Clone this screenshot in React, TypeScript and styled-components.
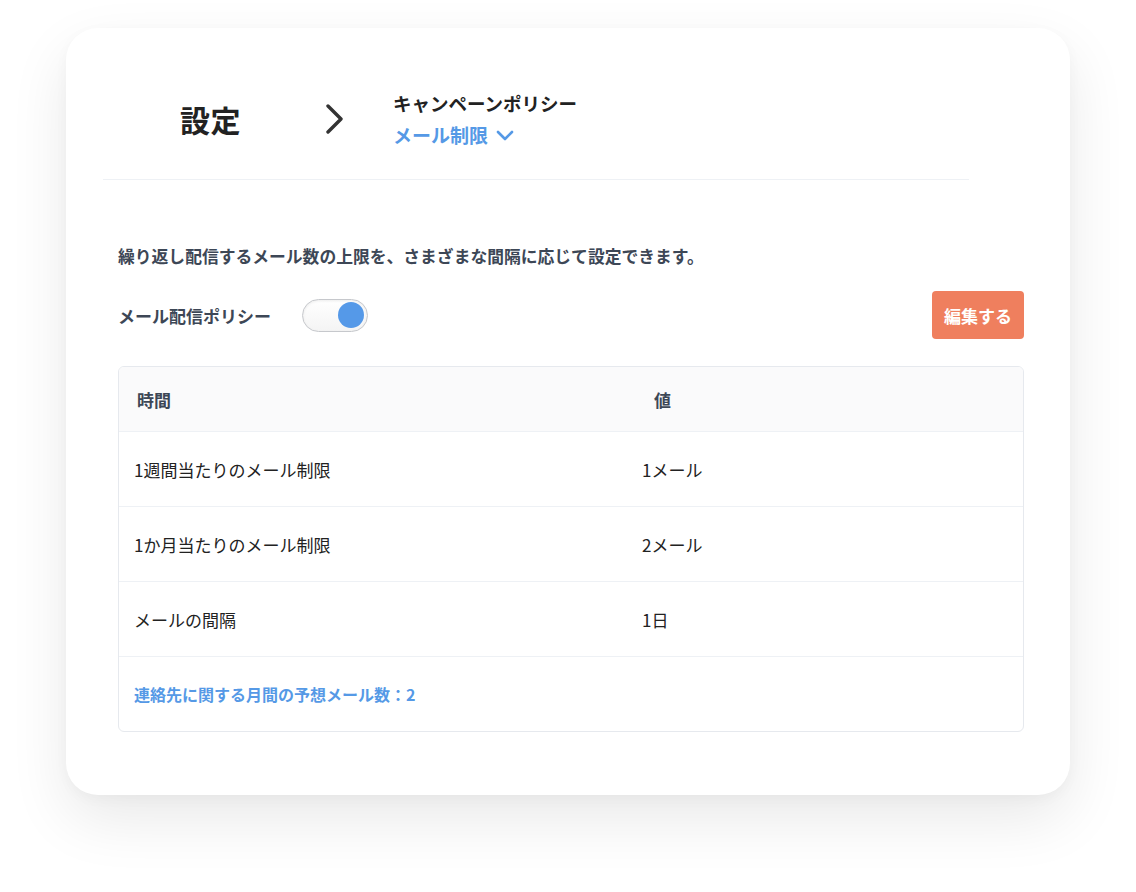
import React from "react";
import styled, { createGlobalStyle } from "styled-components";

const GlobalStyle = createGlobalStyle`
  html, body {
    margin: 0;
    padding: 0;
    background: #ffffff;
    font-family: "Noto Sans CJK JP", "Noto Sans", sans-serif;
  }
`;

const Page = styled.div`
  padding: 28px 66px 98px 66px;
`;

const Card = styled.div`
  width: 1004px;
  background: #fff;
  border-radius: 32px;
  box-shadow: 0 24px 60px rgba(0, 0, 0, 0.09), 0 4px 14px rgba(0, 0, 0, 0.03);
  padding-bottom: 63px;
`;

const Header = styled.div`
  display: flex;
  align-items: center;
  height: 152px;
  box-sizing: border-box;
  margin: 0 101px 0 37px;
  padding: 30px 0 0 77px;
  border-bottom: 1px solid #eef1f5;
`;

const Title = styled.h1`
  margin: 0;
  font-size: 30px;
  font-weight: 700;
  color: #222;
  letter-spacing: 0.5px;
`;

const Chevron = styled.svg`
  margin: 0 48px 0 84px;
`;

const Crumbs = styled.div`
  display: flex;
  flex-direction: column;
  gap: 6px;
`;

const Parent = styled.div`
  font-size: 18.5px;
  font-weight: 700;
  color: #222;
  line-height: 26px;
`;

const Current = styled.div`
  display: flex;
  align-items: center;
  gap: 8px;
  font-size: 19px;
  font-weight: 700;
  color: #5599e6;
  line-height: 26px;
`;

const Body = styled.div`
  padding: 64px 46px 0 52px;
`;

const Description = styled.p`
  margin: 0;
  font-size: 16.8px;
  font-weight: 700;
  color: #3d4756;
  line-height: 24px;
`;

const PolicyRow = styled.div`
  display: flex;
  align-items: center;
  margin-top: 23px;
`;

const PolicyLabel = styled.span`
  font-size: 17px;
  font-weight: 700;
  color: #3d4756;
`;

const Toggle = styled.div<{ $on: boolean }>`
  margin-left: 31px;
  width: 66px;
  height: 33px;
  box-sizing: border-box;
  border: 1.5px solid #c6c8cc;
  border-radius: 17px;
  background: linear-gradient(#ffffff, #f4f4f4);
  box-shadow: inset 0 1px 3px rgba(0, 0, 0, 0.08);
  display: flex;
  align-items: center;
  justify-content: ${(p) => (p.$on ? "flex-end" : "flex-start")};
  padding: 0 3px;
`;

const Knob = styled.div`
  width: 26px;
  height: 26px;
  border-radius: 50%;
  background: #5599e8;
`;

const EditButton = styled.button`
  margin-left: auto;
  width: 92px;
  height: 48px;
  border: none;
  border-radius: 4px;
  background: #ef7f5e;
  color: #fff;
  font-family: inherit;
  font-size: 17px;
  font-weight: 700;
  cursor: pointer;
`;

const Table = styled.div`
  margin-top: 27px;
  border: 1px solid #e6e9ee;
  border-radius: 6px;
  overflow: hidden;
`;

const Row = styled.div<{ $head?: boolean }>`
  display: grid;
  grid-template-columns: ${(p) => (p.$head ? "517px 1fr" : "508px 1fr")};
  align-items: center;
  height: ${(p) => (p.$head ? "64px" : "74px")};
  padding-left: ${(p) => (p.$head ? "18px" : "15px")};
  background: ${(p) => (p.$head ? "#fafafb" : "#fff")};
  border-bottom: 1px solid #eef1f5;
  font-size: 17px;
  font-weight: ${(p) => (p.$head ? 700 : 400)};
  color: ${(p) => (p.$head ? "#3d4756" : "#222")};
`;

const Footer = styled.div`
  height: 74px;
  display: flex;
  align-items: center;
  padding-left: 15px;
  font-size: 16px;
  font-weight: 700;
  color: #5599e6;
`;

const rows = [
  { label: "1週間当たりのメール制限", value: "1メール" },
  { label: "1か月当たりのメール制限", value: "2メール" },
  { label: "メールの間隔", value: "1日" },
];

export default function App() {
  return (
    <Page>
      <GlobalStyle />
      <Card>
        <Header>
          <Title>設定</Title>
          <Chevron width="20" height="30" viewBox="0 0 20 30">
            <path d="M3 2 L16 15 L3 28" fill="none" stroke="#333" strokeWidth="3.4" strokeLinecap="round" strokeLinejoin="round" />
          </Chevron>
          <Crumbs>
            <Parent>キャンペーンポリシー</Parent>
            <Current>
              メール制限
              <svg width="18" height="12" viewBox="0 0 18 12">
                <path d="M2 3 L9 10 L16 3" fill="none" stroke="#5599e6" strokeWidth="2.6" strokeLinecap="round" strokeLinejoin="round" />
              </svg>
            </Current>
          </Crumbs>
        </Header>
        <Body>
          <Description>繰り返し配信するメール数の上限を、さまざまな間隔に応じて設定できます。</Description>
          <PolicyRow>
            <PolicyLabel>メール配信ポリシー</PolicyLabel>
            <Toggle $on>
              <Knob />
            </Toggle>
            <EditButton>編集する</EditButton>
          </PolicyRow>
          <Table>
            <Row $head>
              <span>時間</span>
              <span>値</span>
            </Row>
            {rows.map((r) => (
              <Row key={r.label}>
                <span>{r.label}</span>
                <span>{r.value}</span>
              </Row>
            ))}
            <Footer>連絡先に関する月間の予想メール数：2</Footer>
          </Table>
        </Body>
      </Card>
    </Page>
  );
}
